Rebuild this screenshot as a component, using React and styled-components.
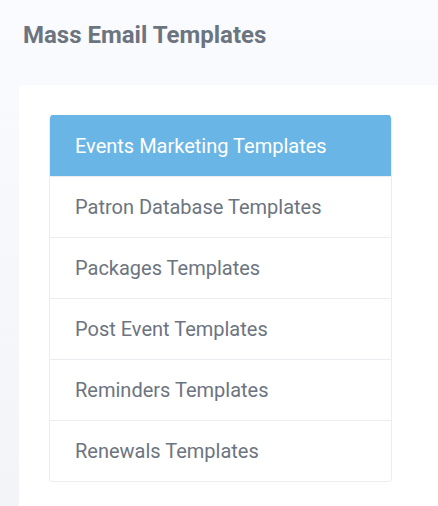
import React, { useState } from 'react';
import styled, { createGlobalStyle } from 'styled-components';

const GlobalStyle = createGlobalStyle`
  html, body {
    margin: 0;
    padding: 0;
    height: 100%;
  }
  body {
    font-family: Roboto, "Liberation Sans", Arial, sans-serif;
    background: linear-gradient(180deg, #fafbfe 0%, #f3f4f8 100%);
    overflow: hidden;
  }
`;

const Page = styled.div`
  display: flex;
  flex-direction: column;
  height: 506px;
  padding-left: 19px;
  box-sizing: border-box;
`;

const Title = styled.h1`
  margin: 0;
  padding: 21px 0 0 4px;
  height: 85px;
  box-sizing: border-box;
  font-size: 24px;
  font-weight: 700;
  color: #6c7480;
  line-height: 28px;
`;

const Card = styled.div`
  flex: 1;
  background: #fff;
  border-top-left-radius: 4px;
  padding: 30px 0 0 30px;
`;

const List = styled.ul`
  list-style: none;
  margin: 0;
  padding: 0;
  width: 343px;
  box-sizing: border-box;
  border: 1px solid #ebedf0;
  border-top: none;
  border-radius: 4px;
  overflow: hidden;
`;

const Item = styled.li`
  height: 61px;
  display: flex;
  align-items: center;
  padding-left: 25px;
  box-sizing: border-box;
  font-size: 20px;
  color: ${(p) => (p.$active ? '#fff' : '#6c7480')};
  background: ${(p) => (p.$active ? '#69b5e6' : '#fff')};
  border-top: 1px solid ${(p) => (p.$active ? '#69b5e6' : '#ebedf0')};
  cursor: pointer;
`;

const templates = [
  'Events Marketing Templates',
  'Patron Database Templates',
  'Packages Templates',
  'Post Event Templates',
  'Reminders Templates',
  'Renewals Templates',
];

export default function App() {
  const [active, setActive] = useState(0);
  return (
    <>
      <GlobalStyle />
      <Page>
        <Title>Mass Email Templates</Title>
        <Card>
          <List>
            {templates.map((t, i) => (
              <Item key={t} $active={i === active} onClick={() => setActive(i)}>
                {t}
              </Item>
            ))}
          </List>
        </Card>
      </Page>
    </>
  );
}
